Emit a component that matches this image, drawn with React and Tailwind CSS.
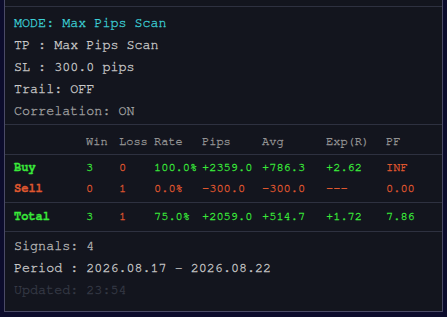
import React from "react";

const mono = { fontFamily: '"Nimbus Mono PS", "FreeMono", "Courier New", Courier, "Liberation Mono", monospace' };

const G = "text-[#3aea3a]";
const R = "text-[#e0582f]";

const rows = [
  { label: "Buy", lc: G, cells: [["3", G], ["0", R], ["100.0%", G], ["+2359.0", G], ["+786.3", G], ["+2.62", G], ["INF", R]] },
  { label: "Sell", lc: R, cells: [["0", R], ["1", R], ["0.0%", R], ["-300.0", R], ["-300.0", R], ["---", R], ["0.00", R]] },
];
const total = { label: "Total", lc: G, cells: [["3", G], ["1", R], ["75.0%", G], ["+2059.0", G], ["+514.7", G], ["+1.72", G], ["7.86", G]] };

const cols = "grid grid-cols-[72px_33px_35px_48px_60px_64px_60px_1fr]";

function Row({ r }) {
  return (
    <div className={`${cols} h-[21px] items-center`}>
      <div className={`${r.lc} font-bold`}>{r.label}</div>
      {r.cells.map(([t, c], i) => (
        <div key={i} className={c}>{t}</div>
      ))}
    </div>
  );
}

export default function App() {
  return (
    <div className="w-[447px] h-[317px] bg-[#0c0c2c] overflow-hidden" style={mono}>
      <div className="ml-[4px] w-[439px] h-[312px] bg-[#13151e] border-x border-b border-[#4a4a66] text-[13.4px] leading-[22px] flex flex-col [-webkit-text-stroke:0.3px_currentColor]">
        <div className="h-[7px] border-b border-[#2e3140]" />
        <div className="pl-[9px] pt-[5px] pb-[2px] border-b border-[#2e3140]">
          <div className="text-[#3ccfd6]">MODE: Max Pips Scan</div>
          <div className="text-[#cacaca]">TP : Max Pips Scan</div>
          <div className="text-[#cacaca]">SL : 300.0 pips</div>
          <div className="text-[#cacaca]">Trail: OFF</div>
          <div className="text-[#a2a2a2]">Correlation: ON</div>
        </div>
        <div className="text-[12px]">
          <div className={`${cols} h-[30px] pt-[3px] items-center text-[#949494] border-b border-[#2e3140] pl-[9px]`}>
            <div />
            <div>Win</div>
            <div>Loss</div>
            <div>Rate</div>
            <div>Pips</div>
            <div>Avg</div>
            <div>Exp(R)</div>
            <div>PF</div>
          </div>
          <div className="pt-[1px] pb-[4px] border-b border-[#2e3140] pl-[9px]">
            {rows.map((r) => (
              <Row key={r.label} r={r} />
            ))}
          </div>
          <div className="pt-[2px] pb-[5px] border-b border-[#2e3140] pl-[9px]">
            <Row r={total} />
          </div>
        </div>
        <div className="pl-[9px] pt-[3px]">
          <div className="text-[#b8b8b8]">Signals: 4</div>
          <div className="text-[#cacaca]">Period : 2026.08.17 - 2026.08.22</div>
          <div className="text-[#363a46]">Updated: 23:54</div>
        </div>
      </div>
    </div>
  );
}
